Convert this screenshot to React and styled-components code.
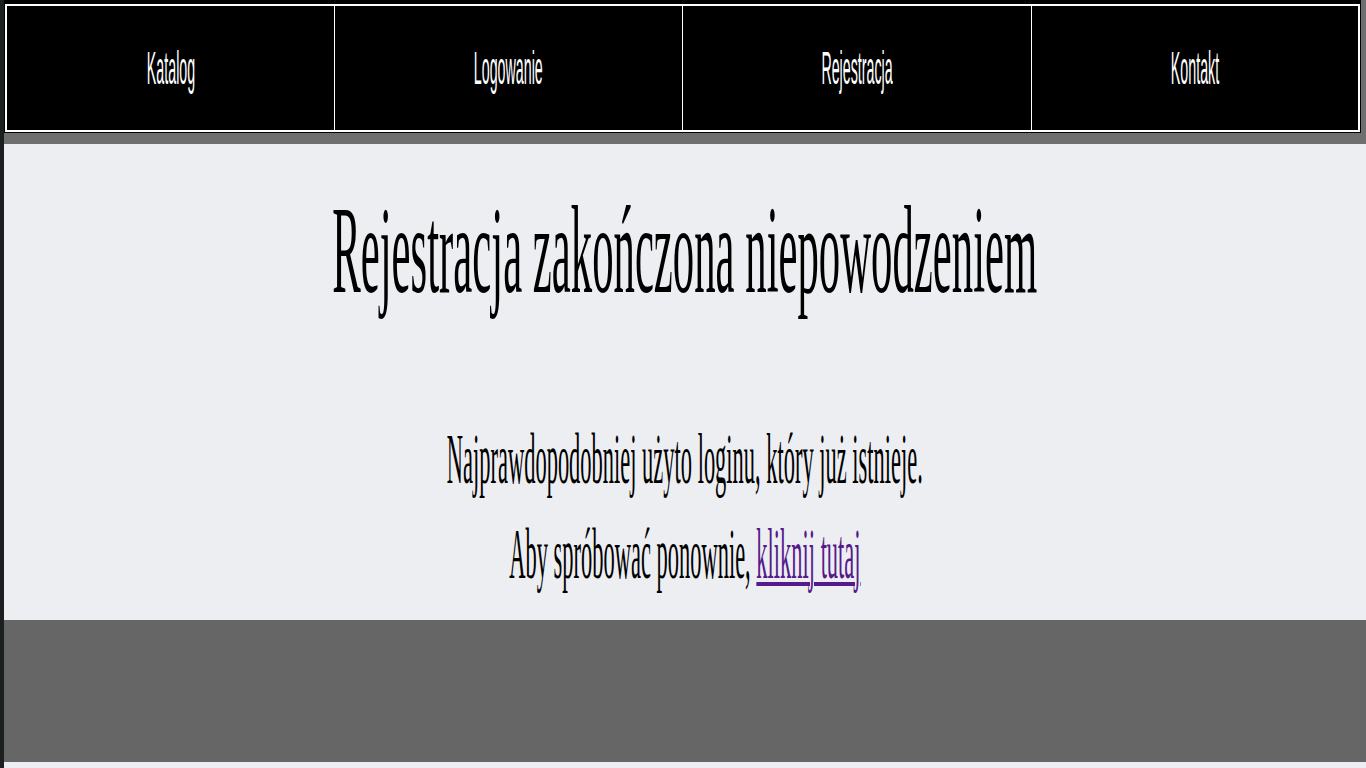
import React from "react";
import styled, { createGlobalStyle } from "styled-components";

const GlobalStyle = createGlobalStyle`
  html, body {
    margin: 0;
    padding: 0;
    background: #edeef2;
  }
  body {
    font-family: "Liberation Serif", "Times New Roman", serif;
  }
`;

const Page = styled.div`
  min-height: 100vh;
  border-left: 4px solid #1c1f20;
  display: flex;
  flex-direction: column;
  box-sizing: border-box;
`;

const HeaderShell = styled.header`
  background: #6f6f6f;
  padding: 0 5px 11px 0;
`;

const NavBar = styled.nav`
  background: #000;
  padding: 4px 1px 1px 1px;
`;

const NavTable = styled.div`
  display: grid;
  grid-template-columns: 328fr 347fr 349fr 327fr;
  gap: 1px;
  background: #fff;
  border: 2px solid #fff;
`;

const NavCell = styled.a`
  height: 124px;
  background: #000;
  display: flex;
  align-items: center;
  justify-content: center;
  color: #fff;
  text-decoration: none;
  font-family: "Liberation Sans", Arial, sans-serif;
  font-size: 46px;
`;

// the text in the reference is strongly condensed horizontally
const Squeeze = styled.span`
  display: inline-block;
  white-space: nowrap;
  transform: scaleX(${(p) => p.$x || 0.31});
  transform-origin: center;
`;

const Main = styled.main`
  background: #edeef2;
  height: 476px;
  padding-top: 35px;
  box-sizing: border-box;
  display: flex;
  flex-direction: column;
  align-items: center;
  overflow: hidden;
`;

const Heading = styled.h1`
  margin: 0 0 90px;
  font-weight: normal;
  font-size: 125px;
  line-height: normal;
  color: #000;
  display: flex;
  justify-content: center;
  width: 100%;
`;

const Line = styled.p`
  margin: 0;
  font-size: 72px;
  line-height: 95px;
  color: #000;
  display: flex;
  justify-content: center;
  width: 100%;
`;

const Link = styled.a`
  color: #551a8b;
  text-decoration: underline;
  text-decoration-thickness: 4px;
  text-underline-offset: 4px;
`;

const Footer = styled.footer`
  background: #666666;
  height: 142px;
`;

const links = ["Katalog", "Logowanie", "Rejestracja", "Kontakt"];

export default function App() {
  return (
    <>
      <GlobalStyle />
      <Page>
        <HeaderShell>
          <NavBar>
            <NavTable>
              {links.map((l) => (
                <NavCell key={l} href="#">
                  <Squeeze $x={0.31}>{l}</Squeeze>
                </NavCell>
              ))}
            </NavTable>
          </NavBar>
        </HeaderShell>
        <Main>
          <Heading>
            <Squeeze $x={0.342}>Rejestracja zakończona niepowodzeniem</Squeeze>
          </Heading>
          <Line>
            <Squeeze $x={0.312}>Najprawdopodobniej użyto loginu, który już istnieje.</Squeeze>
          </Line>
          <Line>
            <Squeeze $x={0.312}>
              Aby spróbować ponownie, <Link href="#">kliknij tutaj</Link>
            </Squeeze>
          </Line>
        </Main>
        <Footer />
      </Page>
    </>
  );
}
